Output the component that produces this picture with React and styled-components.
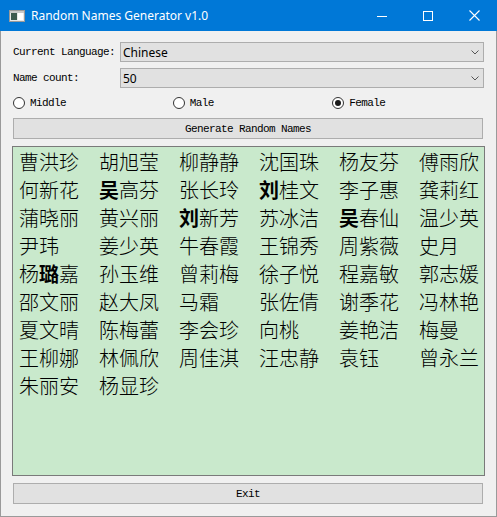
import React from "react";
import styled, { createGlobalStyle } from "styled-components";

const GlobalStyle = createGlobalStyle`
  html, body {
    margin: 0;
    padding: 0;
    background: #ffffff;
  }
`;

const names = [
  "曹洪珍", "胡旭莹", "柳静静", "沈国珠", "杨友芬", "傅雨欣",
  "何新花", "吴高芬", "张长玲", "刘桂文", "李子惠", "龚莉红",
  "蒲晓丽", "黄兴丽", "刘新芳", "苏冰洁", "吴春仙", "温少英",
  "尹玮", "姜少英", "牛春霞", "王锦秀", "周紫薇", "史月",
  "杨璐嘉", "孙玉维", "曾莉梅", "徐子悦", "程嘉敏", "郭志媛",
  "邵文丽", "赵大凤", "马霜", "张佐倩", "谢季花", "冯林艳",
  "夏文晴", "陈梅蕾", "李会珍", "向桃", "姜艳洁", "梅曼",
  "王柳娜", "林佩欣", "周佳淇", "汪忠静", "袁钰", "曾永兰",
  "朱丽安", "杨显珍"
];

// these glyphs come out heavier in the original (font fallback)
const heavy = new Set(["吴", "刘", "璐"]);

const Window = styled.div`
  width: 497px;
  height: 517px;
  box-sizing: border-box;
  border: 1px solid #9a9a9a;
  border-top: none;
  background: #f0f0f0;
  display: flex;
  flex-direction: column;
`;

const TitleBar = styled.div`
  height: 31px;
  margin: 0 -1px;
  background: #0078d7;
  color: #ffffff;
  display: flex;
  align-items: center;
  font-family: "Noto Sans", "Liberation Sans", sans-serif;
  font-size: 12px;
`;

const AppIcon = styled.svg`
  margin: 0 6px 0 9px;
  flex: none;
`;

const Title = styled.span`
  flex: 1;
`;

const Caption = styled.div`
  width: 46px;
  height: 31px;
  display: flex;
  align-items: center;
  justify-content: center;
`;

const Body = styled.div`
  flex: 1;
  display: flex;
  flex-direction: column;
  padding: 11px 11px 13px 11px;
`;

const Form = styled.div`
  display: grid;
  grid-template-columns: 108px 1fr;
  row-gap: 6px;
  align-items: center;
`;

const Label = styled.label`
  font-family: "Liberation Mono", monospace;
  font-size: 11px;
  letter-spacing: -0.6px;
  color: #000;
  padding-left: 1px;
`;

const Combo = styled.div`
  height: 20px;
  box-sizing: border-box;
  margin-right: 1px;
  border: 1px solid #adadad;
  background: #e1e1e1;
  display: flex;
  align-items: center;
  justify-content: space-between;
  padding: 0 4px 0 2px;
  font-family: "Noto Sans", "Liberation Sans", sans-serif;
  font-size: 12px;
  color: #000;
`;

const Radios = styled.div`
  display: grid;
  grid-template-columns: repeat(3, 1fr);
  column-gap: 6px;
  height: 18px;
  margin-top: 6px;
  align-items: center;
`;

const RadioItem = styled.div`
  display: flex;
  align-items: center;
  gap: 5px;
  font-family: "Liberation Mono", monospace;
  font-size: 11px;
  letter-spacing: -0.6px;
  color: #000;
`;

const Dot = styled.span`
  width: 12px;
  height: 12px;
  box-sizing: border-box;
  border-radius: 50%;
  border: 1px solid #333;
  background: #fff;
  display: flex;
  align-items: center;
  justify-content: center;
  margin-left: 1px;
  &::after {
    content: "";
    width: 6px;
    height: 6px;
    border-radius: 50%;
    background: ${p => (p.$on ? "#1a1a1a" : "transparent")};
  }
`;

const Button = styled.button`
  height: 21px;
  margin: ${p => p.$top}px 2px 0 1px;
  border: 1px solid #adadad;
  background: #e1e1e1;
  font-family: "Liberation Mono", monospace;
  font-size: 11px;
  letter-spacing: -0.6px;
  color: #000;
  padding: 0;
`;

const Output = styled.div`
  margin-top: 7px;
  height: 330px;
  box-sizing: border-box;
  border: 1px solid #7a7a7a;
  background: #c9e9cc;
  padding: 1px 0 0 6px;
  display: grid;
  grid-template-columns: repeat(6, 80px);
  grid-auto-rows: 28px;
  align-content: start;
  font-family: "Noto Sans CJK SC", sans-serif;
  font-weight: 300;
  font-size: 20px;
  line-height: 28px;
  color: #000;
`;

const Name = styled.span`
  white-space: nowrap;
`;

const Heavy = styled.b`
  font-weight: 700;
`;

export default function App() {
  return (
    <>
      <GlobalStyle />
      <Window>
        <TitleBar>
          <AppIcon width="16" height="12" viewBox="0 0 16 12">
            <rect x="0.5" y="0.5" width="15" height="11" fill="#e8e8e8" stroke="#9a9a9a" />
            <rect x="1" y="1" width="14" height="2" fill="#c8c8c8" />
            <rect x="2" y="3" width="6" height="7" fill="#3d5a4f" />
            <rect x="9" y="3" width="5" height="7" fill="#ffffff" />
          </AppIcon>
          <Title>Random Names Generator v1.0</Title>
          <Caption>
            <svg width="10" height="10" viewBox="0 0 10 10">
              <line x1="0" y1="5.5" x2="10" y2="5.5" stroke="#fff" strokeWidth="1" />
            </svg>
          </Caption>
          <Caption>
            <svg width="10" height="10" viewBox="0 0 10 10">
              <rect x="0.5" y="0.5" width="9" height="9" fill="none" stroke="#fff" strokeWidth="1" />
            </svg>
          </Caption>
          <Caption>
            <svg width="11" height="11" viewBox="0 0 11 11">
              <path d="M0.5 0.5 L10.5 10.5 M10.5 0.5 L0.5 10.5" stroke="#fff" strokeWidth="1.1" />
            </svg>
          </Caption>
        </TitleBar>
        <Body>
          <Form>
            <Label>Current Language:</Label>
            <Combo>
              <span>Chinese</span>
              <svg width="8" height="5" viewBox="0 0 8 5">
                <path d="M0.5 0.5 L4 4 L7.5 0.5" fill="none" stroke="#555" />
              </svg>
            </Combo>
            <Label>Name count:</Label>
            <Combo>
              <span>50</span>
              <svg width="8" height="5" viewBox="0 0 8 5">
                <path d="M0.5 0.5 L4 4 L7.5 0.5" fill="none" stroke="#555" />
              </svg>
            </Combo>
          </Form>
          <Radios>
            <RadioItem><Dot />Middle</RadioItem>
            <RadioItem><Dot />Male</RadioItem>
            <RadioItem><Dot $on />Female</RadioItem>
          </Radios>
          <Button $top={6}>Generate Random Names</Button>
          <Output>
            {names.map(n => (
              <Name key={n}>
                {[...n].map((c, i) =>
                  heavy.has(c) ? <Heavy key={i}>{c}</Heavy> : <React.Fragment key={i}>{c}</React.Fragment>
                )}
              </Name>
            ))}
          </Output>
          <Button $top={7}>Exit</Button>
        </Body>
      </Window>
    </>
  );
}
